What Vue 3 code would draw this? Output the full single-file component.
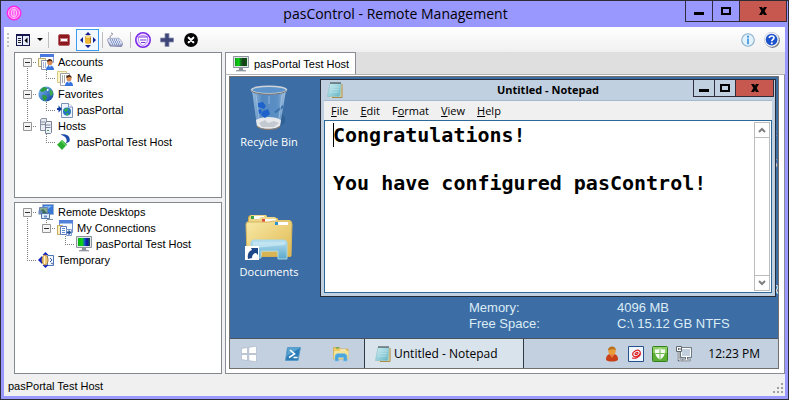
<script setup>
import { ref } from 'vue'

// Each row lists the connector cells drawn before its icon.
const accountTree = [
  { cells: ['box-first'], icon: 'accounts', label: 'Accounts' },
  { cells: ['line', 'elbow'], icon: 'me', label: 'Me' },
  { cells: ['box-mid'], icon: 'globe', label: 'Favorites' },
  { cells: ['line', 'elbow'], icon: 'portal', label: 'pasPortal' },
  { cells: ['box-last'], icon: 'hosts', label: 'Hosts' },
  { cells: ['blank', 'elbow'], icon: 'host', label: 'pasPortal Test Host' }
]
const desktopTree = [
  { cells: ['box-first'], icon: 'desktops', label: 'Remote Desktops' },
  { cells: ['line', 'box-last'], icon: 'connections', label: 'My Connections' },
  { cells: ['line', 'blank', 'elbow'], icon: 'monitor', label: 'pasPortal Test Host' },
  { cells: ['elbow'], icon: 'temporary', label: 'Temporary' }
]
const trees = [
  { name: 'Accounts and hosts', rows: accountTree },
  { name: 'Connections', rows: desktopTree }
]
const connectors = {
  line: 'M9.5 0V16',
  elbow: 'M9.5 0V8M9 8.5H19',
  blank: '',
  'box-first': 'M9.5 8V16M9 8.5H19',
  'box-mid': 'M9.5 0V16M9 8.5H19',
  'box-last': 'M9.5 0V8M9 8.5H19'
}
const menus = [
  ['', 'F', 'ile'],
  ['', 'E', 'dit'],
  ['F', 'o', 'rmat'],
  ['', 'V', 'iew'],
  ['', 'H', 'elp']
]
const tray = ['user', 'swirl', 'shield', 'network']
const note = ref('Congratulations!\n\nYou have configured pasControl!')
</script>

<template>
  <svg class="defs" aria-hidden="true">
    <defs>
      <linearGradient id="gGlobe" x1="0" y1="0" x2="1" y2="1">
        <stop offset="0" stop-color="#7fc4f4" /><stop offset="1" stop-color="#0a3c9c" />
      </linearGradient>
      <linearGradient id="gScreen" x1="0" x2="1">
        <stop offset="0" stop-color="#0aa010" /><stop offset=".35" stop-color="#12d818" /><stop offset=".4" stop-color="#0b8a1c" /><stop offset=".7" stop-color="#1a3a1a" /><stop offset="1" stop-color="#0b5a10" />
      </linearGradient>
      <linearGradient id="gScreenBlue" x1="0" x2="1">
        <stop offset="0" stop-color="#08b010" /><stop offset=".35" stop-color="#10d818" /><stop offset=".55" stop-color="#1060c0" /><stop offset=".75" stop-color="#1010b0" /><stop offset="1" stop-color="#106040" />
      </linearGradient>
      <linearGradient id="gNote" x1="0" y1="0" x2="1" y2="1">
        <stop offset="0" stop-color="#d4f0f4" /><stop offset="1" stop-color="#62b4c4" />
      </linearGradient>
      <linearGradient id="gFolder" x1="0" y1="0" x2="1" y2="1">
        <stop offset="0" stop-color="#f8eaa8" /><stop offset="1" stop-color="#dfb850" />
      </linearGradient>
      <linearGradient id="gTray" x1="0" y1="0" x2="0" y2="1">
        <stop offset="0" stop-color="#b8e0f0" /><stop offset="1" stop-color="#5aa8cc" />
      </linearGradient>
      <linearGradient id="gBin" x1="0" x2="1">
        <stop offset="0" stop-color="#b8d4ee" stop-opacity=".75" /><stop offset=".3" stop-color="#5f95cc" stop-opacity=".7" /><stop offset=".75" stop-color="#6a9ed2" stop-opacity=".7" /><stop offset="1" stop-color="#c4daf0" stop-opacity=".8" />
      </linearGradient>

      <symbol id="i-logo" viewBox="0 0 16 16">
        <circle cx="8" cy="8" r="7.5" fill="#ff28e8" /><circle cx="8" cy="8" r="5.5" fill="#ff58ee" stroke="#ffc0f8" />
        <path d="M8 4v8" stroke="#ffe0fc" stroke-width=".9" /><ellipse cx="8" cy="8" rx="2.600" ry="4" fill="none" stroke="#ffc8f8" />
      </symbol>
      <symbol id="i-pane" viewBox="0 0 14 12">
        <path d="M0 0h14v12H0z" fill="#16184c" /><path d="M1 2h5v9H1zM7 2h6v9H7z" fill="#e8ecff" /><path d="M2 4.500h3M2 6.500h3M2 8.500h3" stroke="#222" /><path d="M11.500 3.500v6L8.500 6.500z" fill="#000" />
      </symbol>
      <symbol id="i-minus" viewBox="0 0 12 12">
        <rect x=".5" y=".5" width="11" height="11" rx="1.500" fill="#8e1820" stroke="#b46468" /><rect x="2.500" y="4.500" width="7" height="3" fill="#fff" stroke="#c07a7c" />
      </symbol>
      <symbol id="i-move" viewBox="0 0 16 16">
        <path d="M8 0l3 3H5zM8 16l3-3H5zM0 8l3-3v6zM16 8l-3-3v6z" fill="#101c90" />
        <path d="M5 5v6c1.500 1.300 4.500 1.300 6 0V5z" fill="#f0b838" /><path d="M10 5.500v6l1-.5V5z" fill="#b87810" /><ellipse cx="8" cy="5" rx="3" ry="1.300" fill="#fff0a8" stroke="#c89028" stroke-width=".6" />
      </symbol>
      <symbol id="i-keyboard" viewBox="0 0 16 15">
        <path d="M3.500 5.500C1.500 2.500 6 3.500 5.500 1L4 .5" fill="none" stroke="#8a8a9c" />
        <path d="M.5 6.500L1 10l2 4 11.500.5L16 12l-1-2z" fill="#8088b0" /><path d="M1 6l11-.3L15.500 10l-1 2.500-10 .3L.5 8.500z" fill="#dcdff0" stroke="#9ca2c4" stroke-width=".8" />
        <path d="M3 7.500h8.500M4 9.500h9M5 11.500h8.500" stroke="#3c64ac" stroke-width="1" stroke-dasharray="1 1" />
      </symbol>
      <symbol id="i-shieldmark" viewBox="0 0 16 16">
        <circle cx="8" cy="8" r="7.200" fill="#f0e6ff" stroke="#7c28e8" stroke-width="1.600" />
        <path d="M3.500 5c3-2 6-2 9 0v3c0 3-2.500 4.500-4.500 5.500C6 12.500 3.500 11 3.500 8z" fill="#fff" stroke="#a870f4" stroke-width=".8" /><path d="M3.500 5h9M5 8h6.500M6 10.500h4.500" stroke="#7c30e0" stroke-width="1.200" />
      </symbol>
      <symbol id="i-plus" viewBox="0 0 14 14">
        <path d="M5 .5h4V5h4.500v4H9v4.500H5V9H.5V5H5z" fill="#3e4678" stroke="#8a90b4" stroke-width=".8" />
      </symbol>
      <symbol id="i-cancel" viewBox="0 0 15 15">
        <circle cx="7.500" cy="7.500" r="7.400" fill="#050505" /><path d="M5 5l5 5M10 5l-5 5" stroke="#fff" stroke-width="2.200" stroke-linecap="round" />
      </symbol>
      <symbol id="i-info" viewBox="0 0 15 15">
        <circle cx="7.500" cy="7.500" r="6.700" fill="#e4f2fc" stroke="#8ab0cc" stroke-width="1.200" /><circle cx="7.500" cy="3.900" r="1.200" fill="#3c94dc" /><path d="M7.500 6v6" stroke="#3c94dc" stroke-width="1.800" />
      </symbol>
      <symbol id="i-help" viewBox="0 0 16 16">
        <circle cx="8.500" cy="8.600" r="7.400" fill="#70747c" /><circle cx="7.600" cy="7.600" r="7.300" fill="#f4f6fa" stroke="#b8bcc8" stroke-width=".6" /><circle cx="7.600" cy="7.600" r="5.900" fill="#1c52cc" />
        <path d="M5.300 6c.2-2.600 4.700-2.700 4.700-.2 0 1.600-2.200 1.700-2.200 3.400" fill="none" stroke="#fff" stroke-width="1.700" /><circle cx="7.800" cy="11.300" r="1" fill="#fff" />
      </symbol>

      <symbol id="i-accounts" viewBox="0 0 16 16">
        <path d="M2.500 .5h13v8h-13z" fill="#fff" stroke="#88a0dc" /><path d="M2 0h14v3H2z" fill="#4878e0" /><path d="M.5 4.500h7v8h-7z" fill="#fff8d0" stroke="#b8a870" /><path d="M3.500 6.500h7v9h-7z" fill="#fff" stroke="#8890a8" />
        <path d="M5 9h4M5 11h3M5 13h3" stroke="#4a68a8" stroke-dasharray="1 1" /><circle cx="11.800" cy="8.500" r="2.600" fill="#d88c54" /><path d="M9 8c0-4 5.500-4 5.600 0l-2-1.200z" fill="#4a2410" /><path d="M8 16c0-3 1.500-4.500 4-4.500s4 1.500 4 4.500z" fill="#3474dc" /><path d="M11 11.500l1 2 1-2z" fill="#fff" />
      </symbol>
      <symbol id="i-me" viewBox="0 0 16 16">
        <path d="M.5 1.500h9v11h-9z" fill="#fff6c4" stroke="#d8c88c" /><path d="M3.500 3.500h9v12h-9z" fill="#fff" stroke="#9ca0ac" />
        <path d="M5 6h6M5 8h4M5 10h4M5 12h3" stroke="#555" stroke-dasharray="1 1" /><circle cx="12" cy="8.800" r="2.500" fill="#d88c54" /><path d="M9.200 8c0-4 5.500-4 5.600 0l-2-1.200z" fill="#4a2410" /><path d="M8 16c0-3 1.500-4.500 4-4.500s4 1.500 4 4.500z" fill="#3474dc" /><path d="M11 11.500l1 2 1-2z" fill="#fff" />
      </symbol>
      <symbol id="i-globe" viewBox="0 0 16 16">
        <circle cx="8" cy="8" r="7.600" fill="url(#gGlobe)" /><path d="M2 5c1-2.500 3-4 5-4l2.500 1.500L7 5 4 6z" fill="#2c9c40" /><path d="M4.500 9l4 .5.500 2.500L7 15c-2-.5-3-3-2.500-6z" fill="#2c9c40" /><path d="M12 3l3 3-.5 3-2 1-1-3z" fill="#3cac50" /><path d="M9 3c2-.5 2.500 1.500 0 2z" fill="#fff" />
      </symbol>
      <symbol id="i-portal" viewBox="0 0 16 16">
        <path d="M4.500 1.500h7l4 3.500v10.500h-11z" fill="#eef4ff" stroke="#7c90b8" /><path d="M11.500 1.500V5h4" fill="#fff" stroke="#7c90b8" /><circle cx="10" cy="9.500" r="4" fill="#2870c8" /><path d="M6.500 8l3-2 2 1-1.500 2.500-1.500.5zM9 11l3 .5-1 2h-1.500zM12.500 7.500l1 2-1 1z" fill="#30b048" /><path d="M0 6h1.500V3.500L5 7l-3.500 3.500V8H0z" fill="#123a9c" />
      </symbol>
      <symbol id="i-hosts" viewBox="0 0 16 16">
        <path d="M2.500 1.500l1.500-1h4.500v11l-1 1h-5z" fill="#e8ebf2" stroke="#8890a0" /><path d="M2.500 4h5M2.500 6.500h5" stroke="#8890a0" />
        <path d="M7.500 4.500l1.500-1h4.500v11l-1 1h-5z" fill="#eef1f7" stroke="#788094" /><path d="M7.500 7h5M7.500 9.500h5" stroke="#788094" /><path d="M9 12.500h2" stroke="#38a058" />
      </symbol>
      <symbol id="i-host" viewBox="0 0 16 16">
        <path d="M5 6l5 4.500L5 16 0 10.800z" fill="#2cae34" /><path d="M5 6l5 4.500-1.500 1.500L3.500 7.500z" fill="#58cc58" /><path d="M3.500 .5C9-.5 14 2 12.500 7.500L8 10C11.500 6.500 9.500 2.500 3.500 .5z" fill="#1c4ca8" />
      </symbol>
      <symbol id="i-desktops" viewBox="0 0 16 16">
        <path d="M4.500 .5h11v10h-11z" fill="#3878d8" stroke="#9cb0d0" /><path d="M6 2h8L6 8z" fill="#84b8f4" /><path d="M1.500 3.500h8v6h-8z" fill="#88ac90" stroke="#6c84b0" /><path d="M2 7l3-2 4 4H2z" fill="#386c54" /><path d="M.5 6.500h4v4h-4z" fill="#6888b8" />
        <path d="M3.500 9.500h8v5h-8z" fill="#e4ecf8" stroke="#5074a8" /><path d="M6 11.500h3v2H6z" fill="#6890c8" /><path d="M9 15.500h6" stroke="#8090a4" />
      </symbol>
      <symbol id="i-connections" viewBox="0 0 16 16">
        <path d="M2.500 .5h13v12h-13z" fill="#f4f8ff" stroke="#7890c8" /><path d="M2 0h14v3.500H2z" fill="#5080d8" /><path d="M.5 5.500h5v9h-5z" fill="#fff0b8" stroke="#c0a868" /><path d="M3.500 6.500h6v8h-6z" fill="#fff" stroke="#5c7cc0" /><path d="M5 8.500h3M5 10.500h3M5 12.500h3" stroke="#5c8cd8" /><path d="M9.500 9.500h5v6h-5z" fill="#fff" stroke="#7c9cd0" /><path d="M9.500 11.500h2V9.500l3 3-3 3v-2h-2z" fill="#24549c" />
      </symbol>
      <symbol id="i-monitor" viewBox="0 0 16 16">
        <path d="M.5 .5h15v11H.5z" fill="#dfe3e8" stroke="#8c949c" /><path d="M2 2h12v8H2z" fill="url(#gScreenBlue)" /><path d="M6 12h4v2H6z" fill="#8c9498" /><path d="M3 15c1-1.300 9-1.300 10 0z" fill="#9ca4ac" stroke="#848c94" stroke-width=".6" />
      </symbol>
      <symbol id="i-tabmonitor" viewBox="0 0 16 16">
        <path d="M.5 .5h15v11H.5z" fill="#dfe3e8" stroke="#8c949c" /><path d="M2 2h12v8H2z" fill="url(#gScreen)" /><path d="M6 12h4v2H6z" fill="#8c9498" /><path d="M3 15c1-1.300 9-1.300 10 0z" fill="#9ca4ac" stroke="#848c94" stroke-width=".6" />
      </symbol>
      <symbol id="i-temporary" viewBox="0 0 16 16">
        <path d="M9.500 3.500h6v10h-6z" fill="#f4f6ff" stroke="#4878b8" /><path d="M12 6l2 2-2 2M13 11l2 1" fill="none" stroke="#3c5c9c" /><path d="M4.500 3L7.500 0l3 3zM7.500 16l-3-3h6zM0 8l4-4v8z" fill="#1420c0" /><ellipse cx="7" cy="8" rx="3" ry="5" fill="#f0c878" stroke="#a8803c" /><path d="M6.500 4v8" stroke="#fff2cc" />
      </symbol>

      <symbol id="i-notepad" viewBox="0 0 16 16">
        <path d="M4 2h11.500v13L3 16z" fill="#e8dca8" /><path d="M15 2v13.500H5" fill="none" stroke="#a48c50" /><path d="M3 1.500h11l-1 13H.5z" fill="url(#gNote)" stroke="#8cc4cc" stroke-width=".7" /><path d="M3.500 5h9M3 7.500h9M2.500 10h9" stroke="#bce4ea" stroke-width=".7" /><path d="M3.500 1h10.500" stroke="#303c40" stroke-width="2" stroke-dasharray="1 1" />
      </symbol>
      <symbol id="i-bin" viewBox="0 0 38 46">
        <path d="M31 28c7 5 5 12-4 15z" fill="#285888" opacity=".6" />
        <path d="M2 5l5 36c2 4 20 4 23 0l6-36z" fill="url(#gBin)" /><path d="M6 35c5-4 20-4 25 0l-1 6c-4 4-20 4-23 0z" fill="#e6e8ec" /><path d="M9 38l6-3 3 3 6-2 5 2-5 4H12z" fill="#c4c8d0" />
        <path d="M8 18l5-1 3 4-2 3-6-2zM13 26l5-2 2 5-5 4-4-3zM8 25l3-1 1 4-3 1z" fill="#1f62cc" /><path d="M33 20l-9 7 2 1 7-5z" fill="#3a70ac" /><path d="M6 10l3 24M32 10l-3 24M19 11v8" stroke="#b4d0ec" opacity=".6" />
        <ellipse cx="19" cy="5" rx="17.500" ry="3.800" fill="#5c93ca" stroke="#d0d4d8" stroke-width="1.600" /><path d="M1.500 5.500c2 5 33 5 35 0" fill="none" stroke="#686c70" stroke-width="1" />
        <path d="M7 41c3 4.500 20 4.500 23 0" fill="none" stroke="#8c7c70" stroke-width="1.300" />
      </symbol>
      <symbol id="i-documents" viewBox="0 0 48 48">
        <path d="M3 8V4l2-2h16l2 3h10v3h12l1 2v34H3z" fill="#cda648" /><path d="M4 5l2-3h15l2 4v8H4z" fill="#ecd588" /><path d="M8 3h11v3H8z" fill="#fff" /><path d="M6 3h3v3H6z" fill="#3ca048" />
        <path d="M14 6l2-2h14l3 3h12v8H14z" fill="#eed98c" /><path d="M19 6h12v3H19z" fill="#fff" /><path d="M17 6h3v3h-3z" fill="#e0503c" />
        <path d="M1 11l1-2h22l4-1h18l1 3-1 32H2z" fill="url(#gFolder)" stroke="#d6b45c" /><path d="M32 9h11v3H32z" fill="#fff" /><path d="M30 9h3v3h-3z" fill="#3090d0" />
        <path d="M6 45V29l2-2h32l2 2v17h-9v-8H16v7z" fill="url(#gTray)" stroke="#a8d8e8" /><path d="M17 39h15v4H17z" fill="#d8b454" /><path d="M8 29h32v3L8 35z" fill="#cceaf4" opacity=".7" />
        <path d="M0 33h14v14H0z" fill="#fff" /><path d="M3 46c-1-5 1-8 4-9l-1-2h7v7l-2-2c-3 0-4 3-4 5z" fill="#1c4888" />
      </symbol>
      <symbol id="i-windows" viewBox="0 0 16 16">
        <path d="M.5 2.500l6-1v6h-6zM7.800 1.300l7.700-1v7.200H7.800zM.5 8.500h6v6l-6-1zM7.800 8.500h7.700v7.200l-7.700-1z" fill="#fff" stroke="#98a4b4" stroke-width=".5" />
      </symbol>
      <symbol id="i-shell" viewBox="0 0 16 14">
        <path d="M2.500 .5h13l-2.500 13H.5z" fill="#2c7cb8" stroke="#5c9cc8" /><path d="M3 1h12L2 9z" fill="#6cb4dc" opacity=".7" /><path d="M5 3l4.500 4L4 10.500M8.500 10.500h4" fill="none" stroke="#fff" stroke-width="1.600" />
      </symbol>
      <symbol id="i-explorer" viewBox="0 0 16 14">
        <path d="M.5 2V.5h6l1 1.500H15v10H.5z" fill="#f0cc60" stroke="#c8a448" stroke-width=".7" /><path d="M1 4h14.500v7.500H.5z" fill="#f6e494" /><path d="M3 1h3" stroke="#38a04c" /><path d="M7 3h6" stroke="#fff" /><path d="M2 14V8.500L4 6.500h8l2 2V14h-3.500v-3.500h-5V14z" fill="#4aa6dc" stroke="#88c4e4" stroke-width=".6" />
      </symbol>
      <symbol id="i-user" viewBox="0 0 16 16">
        <path d="M2 14c0-5 2-6 6-6s6 1 6 6c-3 2-9 2-12 0z" fill="#c84018" /><path d="M5 8l3 4 3-4z" fill="#e87840" /><circle cx="8" cy="5" r="3.700" fill="#e89c38" /><path d="M4 4.500c0-5.500 8-5.500 8 0-2-2-5-1-8 0z" fill="#b8701c" />
      </symbol>
      <symbol id="i-swirl" viewBox="0 0 16 16">
        <path d="M.5 .5h15v15H.5z" fill="#eef6ff" stroke="#28508c" /><g fill="none" stroke="#e02020" stroke-width="1.200"><ellipse cx="8.500" cy="7.500" rx="4" ry="2.800" transform="rotate(-30 8.500 7.500)" /><ellipse cx="8.500" cy="7.500" rx="1.600" ry=".8" transform="rotate(-30 8.500 7.500)" /><path d="M12.500 8c-1 3-4.500 5-8.500 4" /></g>
      </symbol>
      <symbol id="i-shield" viewBox="0 0 16 16">
        <rect x=".5" y=".5" width="15" height="15" rx="1" fill="#5cae34" stroke="#34801c" /><path d="M1 1h14v6H1z" fill="#90d068" /><path d="M8 2.500c2 1 3.500 1 5 1 0 5-1 8-5 10-4-2-5-5-5-10 1.500 0 3 0 5-1z" fill="#f4fbf0" /><path d="M8 3v10M3.500 7.500h9" stroke="#70b850" />
      </symbol>
      <symbol id="i-network" viewBox="0 0 16 16">
        <path d="M5.500 2.500h9v8h-9z" fill="#c3d0e0" stroke="#5c646c" stroke-width="2.600" /><path d="M10.500 11v3M6 14h8.500" stroke="#5c646c" stroke-width="2.600" />
        <path d="M5.500 2.500h9v8h-9z" fill="#c3d0e0" stroke="#fff" /><path d="M10.500 11v3M6.500 14h7.500" stroke="#fff" />
        <path d="M3 5.500V14h3" fill="none" stroke="#5c646c" stroke-width="2.400" /><path d="M3 5.500V14h3" fill="none" stroke="#fff" /><path d="M.5 .5h5v5h-5z" fill="#fff" stroke="#5c646c" /><path d="M2.500 2v2M4 2v2" stroke="#5c646c" />
      </symbol>

      <symbol id="w-min" viewBox="0 0 10 8"><path d="M0 5h10v3H0z" fill="#000" /></symbol>
      <symbol id="w-max" viewBox="0 0 10 8"><path d="M1 1h8v6H1z" fill="none" stroke="#000" stroke-width="2" /></symbol>
      <symbol id="w-close" viewBox="0 0 10 8"><path d="M1 0h3l1 1.800L6 0h3L6.600 4 9 8H6L5 6.200 4 8H1l2.400-4z" fill="#000" /></symbol>
    </defs>
  </svg>

  <div class="window">
    <header class="titlebar">
      <svg class="icon16 logo"><use href="#i-logo" /></svg>
      <h1>pasControl - Remote Management</h1>
      <div class="winbtns">
        <button type="button" class="min" aria-label="Minimize"><svg><use href="#w-min" /></svg></button>
        <button type="button" class="max" aria-label="Maximize"><svg><use href="#w-max" /></svg></button>
        <button type="button" class="close" aria-label="Close"><svg><use href="#w-close" /></svg></button>
      </div>
    </header>

    <div class="client">
      <div class="toolbar" role="toolbar">
        <span class="grip"></span>
        <button type="button" class="pane" aria-label="Panes"><svg class="ic-pane"><use href="#i-pane" /></svg><span class="caret"></span></button>
        <span class="sep first"></span>
        <button type="button" aria-label="Remove"><svg class="ic12"><use href="#i-minus" /></svg></button>
        <button type="button" class="active" aria-label="Fit"><svg class="icon16"><use href="#i-move" /></svg></button>
        <span class="sep"></span>
        <button type="button" aria-label="Keyboard"><svg class="icon16"><use href="#i-keyboard" /></svg></button>
        <span class="sep"></span>
        <button type="button" aria-label="Security"><svg class="icon16"><use href="#i-shieldmark" /></svg></button>
        <button type="button" aria-label="Add"><svg class="icon14"><use href="#i-plus" /></svg></button>
        <button type="button" aria-label="Cancel"><svg class="icon14"><use href="#i-cancel" /></svg></button>
        <span class="spacer"></span>
        <button type="button" aria-label="Information"><svg class="icon14"><use href="#i-info" /></svg></button>
        <button type="button" aria-label="Help"><svg class="icon16"><use href="#i-help" /></svg></button>
      </div>

      <div class="body">
        <aside class="side">
          <ul v-for="tree in trees" :key="tree.name" class="tree" role="tree" :aria-label="tree.name">
            <li v-for="(row, i) in tree.rows" :key="i" role="treeitem">
              <svg v-for="(cell, c) in row.cells" :key="c" class="cell" viewBox="0 0 19 16">
                <path :d="connectors[cell]" fill="none" stroke="#808080" stroke-dasharray="1 1" />
                <g v-if="cell.startsWith('box')">
                  <path d="M5.500 4.500h8v8h-8z" fill="#f4f4f4" stroke="#969696" />
                  <path d="M7 8.500h5" stroke="#303030" />
                </g>
              </svg>
              <svg class="icon16"><use :href="'#i-' + row.icon" /></svg>
              <span>{{ row.label }}</span>
            </li>
          </ul>
        </aside>

        <main class="content">
          <div class="tabs" role="tablist">
            <button type="button" role="tab" aria-selected="true" class="tab">
              <svg class="icon16"><use href="#i-tabmonitor" /></svg>pasPortal Test Host
            </button>
          </div>
          <div class="frame">
            <div class="desktop">
              <div class="wallpaper">
                <div class="shortcuts">
                  <a href="#bin" class="shortcut"><svg class="bin"><use href="#i-bin" /></svg>Recycle Bin</a>
                  <a href="#documents" class="shortcut"><svg class="docs"><use href="#i-documents" /></svg>Documents</a>
                </div>
                <dl class="sysinfo">
                  <dt>Memory:</dt><dd>4096 MB</dd>
                  <dt>Free Space:</dt><dd>C:\ 15.12 GB NTFS</dd>
                </dl>
                <div class="overrun"><span>c</span><span>5</span><span>R</span></div>

                <section class="notepad" aria-label="Untitled - Notepad">
                  <div class="np-title">
                    <svg class="icon16"><use href="#i-notepad" /></svg>
                    <h2>Untitled - Notepad</h2>
                    <div class="winbtns small">
                      <button type="button" class="min" aria-label="Minimize"><svg><use href="#w-min" /></svg></button>
                      <button type="button" class="max" aria-label="Maximize"><svg><use href="#w-max" /></svg></button>
                      <button type="button" class="close" aria-label="Close"><svg><use href="#w-close" /></svg></button>
                    </div>
                  </div>
                  <nav class="menu">
                    <button v-for="(m, i) in menus" :key="i" type="button">{{ m[0] }}<u>{{ m[1] }}</u>{{ m[2] }}</button>
                  </nav>
                  <div class="editor">
                    <span class="cursor"></span>
                    <textarea v-model="note" aria-label="Document text" spellcheck="false"></textarea>
                    <div class="scroll">
                      <button type="button" aria-label="Scroll up"><svg viewBox="0 0 8 6"><path d="M1 5l3-3 3 3" fill="none" stroke="#808080" stroke-width="2" /></svg></button>
                      <button type="button" aria-label="Scroll down"><svg viewBox="0 0 8 6"><path d="M1 1l3 3 3-3" fill="none" stroke="#808080" stroke-width="2" /></svg></button>
                    </div>
                  </div>
                </section>
              </div>

              <footer class="taskbar">
                <button type="button" class="launch" aria-label="Start"><svg class="icon16"><use href="#i-windows" /></svg></button>
                <button type="button" class="launch" aria-label="Shell"><svg class="icon16"><use href="#i-shell" /></svg></button>
                <button type="button" class="launch" aria-label="Explorer"><svg class="icon16"><use href="#i-explorer" /></svg></button>
                <button type="button" class="task"><svg class="icon16"><use href="#i-notepad" /></svg>Untitled - Notepad</button>
                <div class="tray">
                  <svg v-for="t in tray" :key="t" class="icon16"><use :href="'#i-' + t" /></svg>
                </div>
                <time>12:23 PM</time>
              </footer>
            </div>
          </div>
        </main>
      </div>

      <footer class="status">
        <span>pasPortal Test Host</span>
        <svg class="resize" viewBox="0 0 10 10"><path d="M8 0h2v2H8zM4 4h2v2H4zM8 4h2v2H8zM0 8h2v2H0zM4 8h2v2H4zM8 8h2v2H8z" fill="#a0a0a0" /></svg>
      </footer>
    </div>
  </div>
</template>

<style>
body { background: #9898ff; }
</style>

<style scoped>
* { box-sizing: border-box; margin: 0; padding: 0; }
button { border: 0; background: none; font: inherit; color: inherit; flex: none; }
svg { display: block; flex: none; }
.defs { position: absolute; width: 0; height: 0; }
.icon16 { width: 16px; height: 16px; }
.icon14 { width: 14px; height: 14px; }
.ic12 { width: 12px; height: 12px; }

.window {
  display: flex; flex-direction: column; min-height: 100vh;
  border: 1px solid #2c2c34; background: #9898ff;
  padding: 0 3px 3px; font: 11px/16px "Liberation Sans", Arial, sans-serif; color: #000;
}
.titlebar { display: flex; height: 26px; }
.titlebar h1 { flex: 1; text-align: center; padding-left: 84px; font: 14px/26px "Open Sans", sans-serif; }
.logo { margin: 4px 0 0 2px; }

.winbtns { display: flex; height: 21px; margin-right: -2px; border: 1px solid #302c3c; border-top: 0; }
.winbtns button { display: flex; align-items: center; justify-content: center; width: 27px; border-right: 1px solid #302c3c; }
.winbtns .close { width: 46px; border-right: 0; background: #c75850; }
.winbtns svg { width: 10px; height: 8px; }
.winbtns.small { height: 17px; }
.winbtns.small button { width: 21px; }
.winbtns.small .close { width: 37px; }

.client { flex: 1; display: flex; flex-direction: column; background: #f0f0f0; }
.toolbar {
  display: flex; align-items: center; height: 25px; padding: 0 1px 0 3px;
  background: linear-gradient(#ffffff, #f0f0f0);
}
.toolbar button { display: flex; align-items: center; justify-content: center; width: 24px; height: 22px; }
.toolbar .pane { width: 37px; gap: 7px; }
.toolbar .active { width: 23px; border: 1px solid #3c9cf0; background: #f2f8ff; }
.ic-pane { width: 14px; height: 12px; }
.caret { border: 3px solid transparent; border-top-color: #000; border-bottom: 0; }
.grip { width: 2px; height: 14px; margin-right: 2px; background: repeating-linear-gradient(#c0c0c0 0 2px, transparent 2px 4px); }
.sep { width: 1px; height: 16px; margin-left: 3px; background: #bdbdbd; }
.sep.first { margin: 0 3px 0 0; }
.spacer { flex: 1; }

.body { flex: 1; display: flex; gap: 3px; }
.side { display: flex; flex-direction: column; gap: 4px; width: 218px; padding-left: 10px; }
.tree { list-style: none; flex: 1; padding: 1px 0 0 3px; border: 1px solid #828790; background: #fff; }
.tree:first-child { flex: none; height: 146px; }
.tree li { display: flex; height: 16px; }
.tree span { padding-left: 4px; white-space: nowrap; }
.cell { width: 19px; height: 16px; }
.tree .icon16 { margin-left: 1px; }

.content { flex: 1; min-width: 0; display: flex; flex-direction: column; }
.tabs { display: flex; height: 22px; background: #dfdfe0; }
.tab {
  display: flex; align-items: center; gap: 5px; height: 22px; padding: 0 6px 0 7px;
  border: 1px solid #898c95; border-bottom: 0; background: #fff;
}
.frame { flex: 1; display: flex; padding: 1px 5px 4px 3px; border: 1px solid #898c95; border-top-color: #b4b4b8; background: #fff; }
.desktop { flex: 1; display: flex; flex-direction: column; border: 1px solid #72706c; }
.wallpaper { position: relative; flex: 1; display: flex; flex-direction: column; justify-content: space-between; background: #3c6ea5; }
.shortcuts { display: flex; flex-direction: column; width: 78px; font: 11px/16px "Open Sans", sans-serif; }
.shortcut { display: flex; flex-direction: column; align-items: center; justify-content: flex-end; height: 73px; color: #fff; text-decoration: none; white-space: nowrap; }
.shortcut + .shortcut { height: 130px; }
.bin { width: 38px; height: 46px; margin-bottom: 3px; }
.docs { width: 48px; height: 48px; margin-bottom: 3px; }
.sysinfo {
  display: grid; grid-template-columns: 148px auto; justify-content: start;
  padding: 0 0 6px 239px; font-size: 13px; color: #dcecf6;
}
/* Wallpaper text running off the right edge, mostly hidden by the window above it. */
.overrun { position: absolute; right: 0; top: 48px; width: 8px; overflow: hidden; font-size: 13px; color: #dcecf6; }
.overrun span { display: block; margin-bottom: 15px; }
.overrun span:last-child { margin: 110px 0 0; }

.notepad {
  position: absolute; left: 90px; right: 2px; top: 2px; bottom: 41px;
  display: flex; flex-direction: column; padding: 0 3px 3px;
  border: 1px solid #262c38; background: #c1d0e0;
}
.np-title { display: flex; height: 20px; padding-left: 3px; font-family: "Open Sans", sans-serif; }
.np-title .icon16 { margin-top: 2px; }
.np-title h2 { flex: 1; text-align: center; padding-left: 60px; font-size: 11px; line-height: 20px; }
.menu { display: flex; gap: 12px; height: 20px; padding-left: 7px; border-top: 1px solid #a4bace; background: #f0f0f0; font: 11px/18px "Open Sans", sans-serif; }
.editor { position: relative; flex: 1; display: flex; border: 1px solid #2c6898; background: #fff; padding: 1px; }
.editor textarea {
  flex: 1; min-width: 0; padding: 1px 0 0 7px; border: 0; outline: 0; resize: none; overflow: hidden;
  background: none; font: bold 20px/24px "DejaVu Sans Mono", monospace; color: #000;
}
.cursor { position: absolute; left: 8px; top: 2px; width: 1px; height: 24px; background: #000; }
.scroll { display: flex; flex-direction: column; justify-content: space-between; width: 16px; border: 1px solid #bcbcbc; }
.scroll button { display: flex; align-items: center; justify-content: center; height: 15px; border-bottom: 1px solid #bcbcbc; }
.scroll button + button { border-bottom: 0; border-top: 1px solid #bcbcbc; }
.scroll svg { width: 8px; height: 6px; }

.taskbar { display: flex; height: 30px; border-top: 1px solid #4c5460; background: #c3d0e0; font: 12px/29px "Open Sans", sans-serif; }
.launch { display: flex; align-items: center; justify-content: center; width: 38px; }
.launch:nth-child(2) { width: 50px; }
.launch:nth-child(3) { width: 46px; }
.task { display: flex; align-items: center; gap: 3px; width: 160px; padding-left: 10px; border: 1px solid #303840; border-width: 0 1px; background: #d9e3ec; }
.tray { display: flex; align-items: center; gap: 8px; margin-left: auto; }
.taskbar time { padding: 0 18px 0 16px; }

.status { display: flex; align-items: center; justify-content: space-between; height: 22px; padding: 2px 2px 0 4px; }
.resize { width: 10px; height: 10px; align-self: flex-end; margin-bottom: 3px; }
</style>
